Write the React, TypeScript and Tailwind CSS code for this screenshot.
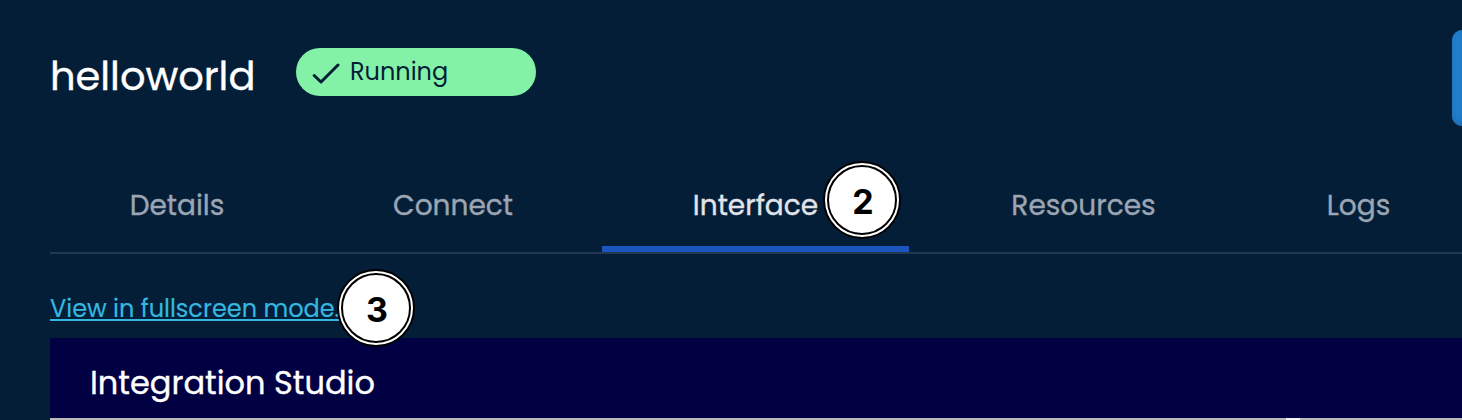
const tabs = [
  { label: 'Details', box: 'w-[254px]' },
  { label: 'Connect', box: 'w-[298px]' },
  { label: 'Interface', box: 'w-[307px]', active: true },
  { label: 'Resources', box: 'w-[349px]' },
  { label: 'Logs', box: 'w-[201px]' },
];

function Step({ value, place }: { value: string; place: string }) {
  return (
    <span className={`absolute z-10 flex size-[78px] items-center justify-center rounded-full border-2 border-black bg-white p-0.5 ${place}`}>
      <span className="flex size-full items-center justify-center rounded-full border-2 border-black pt-1 pl-0.5 font-['Inter',sans-serif] text-[34px] leading-none font-bold text-black [-webkit-text-stroke:0]">
        {value}
      </span>
    </span>
  );
}

export default function App() {
  return (
    <div className="h-[420px] w-full overflow-hidden bg-[#041e37] pl-[50px] font-['Poppins','Inter',sans-serif] whitespace-nowrap [-webkit-text-stroke:0.35px_currentColor]">
      <header className="flex h-[158px] items-start">
        <h1 className="mt-[46px] w-[246px] text-[40px] leading-[60px] font-normal tracking-[-0.05px] text-white">helloworld</h1>
        <div className="mt-12 flex h-12 w-60 items-center rounded-full bg-[#84f2a6] pl-4 text-[#041e37] [-webkit-text-stroke:0]">
          <svg width="30" height="24" viewBox="0 0 30 24" fill="none" stroke="currentColor" strokeWidth="3" strokeLinecap="round" strokeLinejoin="round">
            <path d="M2.2 15.5 L9 22 L26 5" />
          </svg>
          <span className="ml-2 text-2xl leading-[48px]">Running</span>
        </div>
        <button aria-label="Open" className="mt-[30px] ml-auto h-24 w-[10px] rounded-l-xl bg-[#2382d2] shadow-[inset_1px_-3px_7px_#1b6fb6]" />
      </header>

      <nav className="relative flex h-24 border-b-2 border-[#24384d]">
        {tabs.map((tab) => (
          <div key={tab.label} className={`flex h-[94px] shrink-0 items-center justify-center border-b-[6px] pt-2 text-[28px] ${tab.box} ${tab.active ? 'border-[#1d55c0] text-[#e1e4e9]' : 'border-transparent text-[#9ba5b3]'}`}>
            {tab.label}
          </div>
        ))}
        <Step value="2" place="left-[773px] top-[3px]" />
      </nav>

      <div className="relative h-[84px] pt-[37px]">
        <a href="#" className="block w-fit text-2xl leading-9 text-[#35b8e0] underline decoration-2 underline-offset-2 [-webkit-text-stroke:0.15px_currentColor]">View in fullscreen mode.</a>
        <Step value="3" place="left-[287px] top-[15px]" />
      </div>

      <section>
        <h2 className="h-20 bg-[#010042] pt-[21px] pl-10 text-[32px] leading-[48px] font-normal text-white">Integration Studio</h2>
        <div className="flex h-0.5 bg-[#bababa] pl-[1236px]"><div className="h-full w-3.5 bg-[#f5f5f5]" /></div>
      </section>
    </div>
  );
}
